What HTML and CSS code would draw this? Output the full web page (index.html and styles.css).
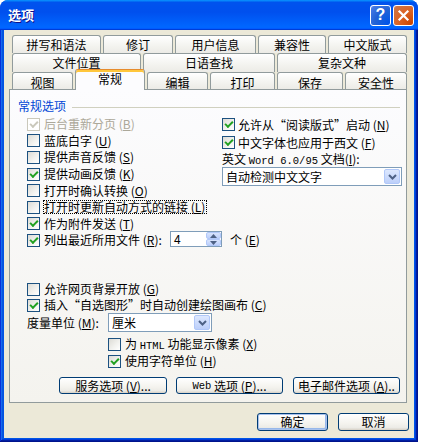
FILE: index.html
```html
<!DOCTYPE html>
<html lang="zh-CN">
<head>
<meta charset="utf-8">
<title>选项</title>
<link rel="stylesheet" href="styles.css">
</head>
<body>
<div class="window">
  <div class="titlebar">
    <span class="title">选项</span>
    <div class="tb-btn help">?</div>
    <div class="tb-btn close"><svg width="13" height="13" viewBox="0 0 13 13"><path d="M2.5 2.5 L10.5 10.5 M10.5 2.5 L2.5 10.5" stroke="#fff" stroke-width="2.2" stroke-linecap="square"/></svg></div>
  </div>
  <div class="frame">
    <div class="body">
      <div class="tabs">
        <div class="tabrow r1">
          <div class="tab">拼写和语法</div>
          <div class="tab">修订</div>
          <div class="tab">用户信息</div>
          <div class="tab">兼容性</div>
          <div class="tab">中文版式</div>
        </div>
        <div class="tabrow r2">
          <div class="tab">文件位置</div>
          <div class="tab">日语查找</div>
          <div class="tab">复杂文种</div>
        </div>
        <div class="tabrow r3">
          <div class="tab">视图</div>
          <div class="tab sel">常规</div>
          <div class="tab">编辑</div>
          <div class="tab">打印</div>
          <div class="tab">保存</div>
          <div class="tab">安全性</div>
        </div>
      </div>
      <div class="panel">
        <div class="group-head"><span>常规选项</span></div>
        <div class="top">
          <div class="col-left">
            <div class="row dis"><span class="cb on"></span><span>后台重新分页 (<u>B</u>)</span></div>
            <div class="row"><span class="cb"></span><span>蓝底白字 (<u>U</u>)</span></div>
            <div class="row"><span class="cb"></span><span>提供声音反馈 (<u>S</u>)</span></div>
            <div class="row"><span class="cb on"></span><span>提供动画反馈 (<u>K</u>)</span></div>
            <div class="row"><span class="cb"></span><span>打开时确认转换 (<u>O</u>)</span></div>
            <div class="row"><span class="cb"></span><span class="focus">打开时更新自动方式的链接 (<u>L</u>)</span></div>
            <div class="row"><span class="cb on"></span><span>作为附件发送 (<u>T</u>)</span></div>
            <div class="row last"><span class="cb on"></span><span class="recent">列出最近所用文件 (<u>R</u>):</span>
              <div class="spin"><span class="spin-val">4</span><div class="spin-btns"><div class="sb"><svg width="7" height="4" viewBox="0 0 7 4"><path d="M0 4 L3.5 0 L7 4Z" fill="#4D6185"/></svg></div><div class="sb"><svg width="7" height="4" viewBox="0 0 7 4"><path d="M0 0 L3.5 4 L7 0Z" fill="#4D6185"/></svg></div></div></div>
              <span class="unit">个 (<u>E</u>)</span>
            </div>
          </div>
          <div class="col-right">
            <div class="rrow"><span class="cb on"></span><span>允许从“阅读版式”启动 (<u>N</u>)</span></div>
            <div class="rrow"><span class="cb on"></span><span>中文字体也应用于西文 (<u>F</u>)</span></div>
            <div class="rlabel">英文 <span class="mono">Word 6.0/95</span>&nbsp;文档(<u>I</u>):</div>
            <div class="select wide"><span class="sel-val">自动检测中文文字</span><span class="sel-btn"><svg width="9" height="6" viewBox="0 0 9 6"><path d="M1 1 L4.5 4.5 L8 1" fill="none" stroke="#4D6185" stroke-width="2"/></svg></span></div>
          </div>
        </div>
        <div class="bottom">
          <div class="brow"><span class="cb"></span><span>允许网页背景开放 (<u>G</u>)</span></div>
          <div class="brow"><span class="cb on"></span><span>插入“自选图形”时自动创建绘图画布 (<u>C</u>)</span></div>
          <div class="brow unitrow"><span class="unit-label">度量单位 (<u>M</u>):</span>
            <div class="select small"><span class="sel-val">厘米</span><span class="sel-btn"><svg width="9" height="6" viewBox="0 0 9 6"><path d="M1 1 L4.5 4.5 L8 1" fill="none" stroke="#4D6185" stroke-width="2"/></svg></span></div>
          </div>
          <div class="brow indent r4"><span class="cb"></span><span>为&nbsp;<span class="mono">HTML</span>&nbsp;功能显示像素 (<u>X</u>)</span></div>
          <div class="brow indent"><span class="cb on"></span><span>使用字符单位 (<u>H</u>)</span></div>
        </div>
        <div class="btnrow">
          <div class="btn b1">服务选项 (<u>V</u>)...</div>
          <div class="btn b2"><span class="mono">Web</span>&nbsp;选项 (<u>P</u>)...</div>
          <div class="btn b3">电子邮件选项 (<u>A</u>)..</div>
        </div>
      </div>
      <div class="dlg-buttons">
        <div class="btn dlg default">确定</div>
        <div class="btn dlg">取消</div>
      </div>
    </div>
  </div>
</div>
</body>
</html>
```

FILE: styles.css
```css
* { box-sizing: border-box; }
body {
  margin: 0;
  background: #fff;
  font-family: "Noto Sans CJK SC", "Noto Sans", sans-serif;
  font-size: 12px;
  color: #000;
}
u { text-decoration: underline; text-underline-offset: 1px; }
.mono { font-family: "Liberation Mono", monospace; font-size: 10.5px; }

.window {
  width: 418px;
  height: 442px;
  display: flex;
  flex-direction: column;
  border-radius: 8px 8px 0 0;
  overflow: hidden;
  background: #0055E5;
}
.titlebar {
  height: 30px;
  flex: none;
  display: flex;
  align-items: center;
  padding: 0 4px 0 8px;
  gap: 2px;
  background: linear-gradient(180deg, #0997ff, #0053ee 8%, #0050ee 40%, #0066ff 88%, #0066ff 93%, #005bff 95%, #003dd7 96%, #003dd7);
}
.title {
  flex: 1;
  color: #fff;
  font-weight: bold;
  font-size: 13px;
  line-height: 16px;
  text-shadow: 1px 1px #0f1089;
}
.tb-btn {
  width: 21px;
  height: 21px;
  border: 1px solid #fff;
  border-radius: 3px;
  display: flex;
  align-items: center;
  justify-content: center;
}
.help {
  background: radial-gradient(circle at 90% 90%, #0054e9 0%, #2263d5 55%, #4479e4 90%, #a3bbec 100%);
  color: #fff;
  font-family: "Liberation Sans", sans-serif;
  font-weight: bold;
  font-size: 16px;
  line-height: 1;
}
.close {
  background: radial-gradient(circle at 90% 90%, #cc4600 0%, #dc6527 55%, #cd7546 90%, #e7a88a 100%);
}

.frame {
  flex: 1;
  display: flex;
  padding: 0 4px 4px 4px;
  background: #0055E5;
  box-shadow: inset -1px -1px #00138c, inset 1px 0 #0831d9, inset -2px -2px #001ea0, inset 2px 0 #166aee, inset -3px -3px #003bda, inset 3px 0 #0855dd;
}
.body {
  flex: 1;
  background: #ECE9D8;
  display: flex;
  flex-direction: column;
  padding: 5px 0 0 5px;
}

/* tabs */
.tabs { display: flex; flex-direction: column; }
.tabrow { display: flex; gap: 2px; padding-left: 3px; }
.r1 { height: 18px; }
.r2 { height: 19px; }
.r3 { height: 17px; }
.tab {
  border: 1px solid #919B9C;
  border-bottom: none;
  border-radius: 3px 3px 0 0;
  background: linear-gradient(#ffffff, #f3f3ef 60%, #ecebe6);
  text-align: center;
  line-height: 17px;
  height: 100%;
  white-space: nowrap;
}
.r1 .tab:nth-child(1) { width: 89px; }
.r1 .tab:nth-child(2) { width: 70px; }
.r1 .tab:nth-child(3) { width: 81px; }
.r1 .tab:nth-child(4) { width: 68px; }
.r1 .tab:nth-child(5) { width: 79px; }
.r2 .tab:nth-child(1) { width: 129px; }
.r2 .tab:nth-child(2) { width: 132px; }
.r2 .tab:nth-child(3) { width: 130px; }
.r3 .tab { line-height: 19px; height: 17px; }
.r3 .tab:nth-child(1) { width: 61px; }
.r3 .tab:nth-child(2) { width: 70px; }
.r3 .tab:nth-child(3) { width: 61px; }
.r3 .tab:nth-child(4) { width: 65px; }
.r3 .tab:nth-child(5) { width: 66px; }
.r3 .tab:nth-child(6) { width: 62px; }
.r3 .tab.sel {
  position: relative;
  z-index: 2;
  height: 21px;
  margin-top: -3px;
  background: #fcfcfe;
  border-top: 1px solid #e68b2c;
  box-shadow: inset 0 2px #ffc73c;
  line-height: 18px;
}

/* panel */
.panel {
  width: 398px;
  height: 314px;
  border: 1px solid #919B9C;
  background: linear-gradient(#fcfcfe, #f4f3ee);
  display: flex;
  flex-direction: column;
}
.group-head {
  margin: 9px 6px 0 8px;
  height: 14px;
  display: flex;
  align-items: center;
  gap: 6px;
  color: #0046D5;
  line-height: 14px;
}
.group-head::after {
  content: "";
  flex: 1;
  height: 1px;
  background: #D0D0BF;
  margin-top: 2px;
}

.cb {
  flex: none;
  position: relative;
  width: 13px;
  height: 13px;
  margin-right: 4px;
  border: 1px solid #1C5180;
  background: linear-gradient(135deg, #dcdbd5 0%, #f3f3f0 60%, #ffffff 100%);
}
.cb.on::after {
  content: "";
  position: absolute;
  left: 2px;
  top: 2px;
  width: 6px;
  height: 3px;
  border-left: 2px solid #21A121;
  border-bottom: 2px solid #21A121;
  transform: rotate(-45deg);
}
.dis { color: #ACA899; }
.dis .cb { border-color: #CAC8BB; background: #fff; }
.dis .cb.on::after { border-color: #CAC8BB; }

.top { display: flex; margin-top: 3px; padding-left: 17px; }
.col-left { width: 195px; flex: none; }
.row {
  display: flex;
  align-items: center;
  height: 16.6px;
  white-space: nowrap;
  line-height: 14px;
}
.focus { border: 1px dotted #000; padding: 0 1px 0 0; margin-left: -1px; line-height: 12px; height: 14px; }
.row.last { height: 16px; margin-top: -1px; align-items: flex-end; }
.recent { width: 122px; flex: none; }
.spin {
  flex: none;
  width: 52px;
  height: 16px;
  margin-left: 4px;
  border: 1px solid #7F9DB9;
  background: #fff;
  display: flex;
  align-items: center;
}
.spin-val { flex: 1; padding-left: 3px; line-height: 14px; }
.spin-btns { width: 15px; height: 14px; display: flex; flex-direction: column; }
.sb {
  flex: 1;
  border: 1px solid #B1C8F9;
  border-radius: 2px;
  background: linear-gradient(#d8e4fd, #bccffa);
  display: flex;
  align-items: center;
  justify-content: center;
}
.unit { margin-left: 8px; line-height: 14px; }

.col-right { width: 180px; flex: none; margin-top: -1px; }
.rrow { display: flex; align-items: center; height: 18px; white-space: nowrap; }
.rrow .cb { margin-right: 3px; }
.rlabel { height: 16px; line-height: 16px; white-space: nowrap; }
.select {
  height: 19px;
  border: 1px solid #7F9DB9;
  background: #fff;
  display: flex;
  align-items: center;
  padding: 0 1px 0 3px;
}
.select.wide { width: 180px; }
.select.small { width: 104px; }
.sel-val { flex: 1; line-height: 15px; }
.sel-btn {
  width: 16px;
  height: 15px;
  border: 1px solid #B1C8F9;
  border-radius: 2px;
  background: linear-gradient(#dde8fe, #bccffa);
  display: flex;
  align-items: center;
  justify-content: center;
}

.bottom { margin-top: 34px; padding-left: 17px; display: flex; flex-direction: column; }
.brow { display: flex; align-items: center; height: 16px; white-space: nowrap; line-height: 14px; }
.unitrow { height: 19px; }
.unit-label { width: 81px; flex: none; }
.brow.indent { padding-left: 81px; }
.brow.r4 { margin-top: 4px; height: 17px; }

.btnrow { display: flex; gap: 9px; margin-top: 8px; padding-left: 49px; }
.btn {
  height: 17px;
  border: 1px solid #003C74;
  border-radius: 3px;
  background: linear-gradient(#ffffff, #f4f3ee 60%, #ecebe6 85%, #d6d0c5);
  display: flex;
  align-items: center;
  justify-content: center;
  white-space: nowrap;
  line-height: 14px;
}
.b1 { width: 108px; }
.b2 { width: 107px; }
.b3 { width: 107px; margin-left: 1px; }

.dlg-buttons { display: flex; justify-content: flex-end; gap: 10px; margin-top: 10px; padding-right: 5px; }
.btn.dlg { width: 71px; height: 18px; }
.btn.default { box-shadow: inset 0 0 0 1px #a9c2ed, inset -1px -1px 0 1px #98b8ea; }
```
